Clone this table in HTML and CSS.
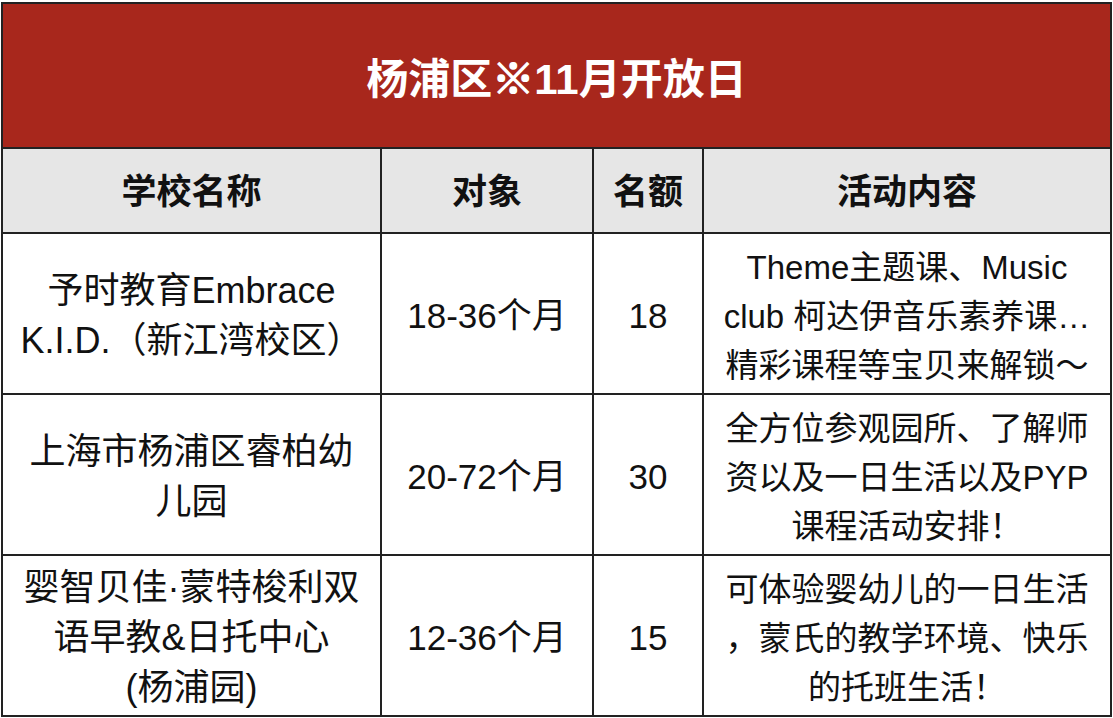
FILE: index.html
```html
<!DOCTYPE html>
<html lang="zh-CN">
<head>
<meta charset="utf-8">
<title>杨浦区※11月开放日</title>
<link rel="stylesheet" href="styles.css">
</head>
<body>
<div class="sheet">
  <table class="schedule">
    <colgroup>
      <col class="c-name">
      <col class="c-age">
      <col class="c-quota">
      <col class="c-act">
    </colgroup>
    <thead>
      <tr class="title-row">
        <th colspan="4" class="title">杨浦区<span class="mark">※</span>11月开放日</th>
      </tr>
      <tr class="head-row">
        <th>学校名称</th>
        <th>对象</th>
        <th>名额</th>
        <th>活动内容</th>
      </tr>
    </thead>
    <tbody>
      <tr class="data-row">
        <td class="name">予时教育Embrace<br>K.I.D.（新江湾校区）</td>
        <td>18-36个月</td>
        <td>18</td>
        <td class="act">Theme主题课、Music<br>club 柯达伊音乐素养课…<br>精彩课程等宝贝来解锁～</td>
      </tr>
      <tr class="data-row">
        <td class="name">上海市杨浦区睿柏幼<br>儿园</td>
        <td>20-72个月</td>
        <td>30</td>
        <td class="act">全方位参观园所、了解师<br>资以及一日生活以及PYP<br>课程活动安排！</td>
      </tr>
      <tr class="data-row">
        <td class="name">婴智贝佳·蒙特梭利双<br>语早教&amp;日托中心<br>(杨浦园)</td>
        <td>12-36个月</td>
        <td>15</td>
        <td class="act">可体验婴幼儿的一日生活<br>，蒙氏的教学环境、快乐<br>的托班生活！</td>
      </tr>
    </tbody>
  </table>
</div>
</body>
</html>
```

FILE: styles.css
```css
html, body {
  margin: 0;
  padding: 0;
  background: #ffffff;
}

.sheet {
  padding: 2px 0 0 1px;
}

.schedule {
  width: 1109px;
  border-collapse: collapse;
  table-layout: fixed;
  font-family: "Liberation Sans", "Noto Sans CJK SC", sans-serif;
  color: #111111;
}

.c-name { width: 379px; }
.c-age { width: 212px; }
.c-quota { width: 110px; }
.c-act { width: 408px; }

.schedule th,
.schedule td {
  border: 2px solid #222222;
  text-align: center;
  vertical-align: middle;
  padding: 0 16px;
  white-space: nowrap;
}

.title-row { height: 145px; }

.title {
  background: #a8271c;
  color: #ffffff;
  font-size: 42px;
  font-weight: 700;
  padding-bottom: 16px;
  padding-left: 0;
  padding-right: 12px;
}

.mark {
  font-family: "Noto Sans CJK SC", sans-serif;
  font-weight: 900;
  -webkit-text-stroke: 1.5px #ffffff;
}

.head-row { height: 85px; }

.head-row th {
  background: #e6e6e6;
  font-size: 35px;
  font-weight: 700;
  color: #111111;
  padding-bottom: 4px;
}

.data-row { height: 161px; }

.data-row td {
  font-size: 35px;
  line-height: 50px;
  padding-top: 4px;
}

.data-row td.name {
  font-size: 36px;
  padding: 4px 10px 0;
}

.data-row td.act {
  font-size: 33px;
  line-height: 49px;
  padding: 6px 12px 0;
}
```
